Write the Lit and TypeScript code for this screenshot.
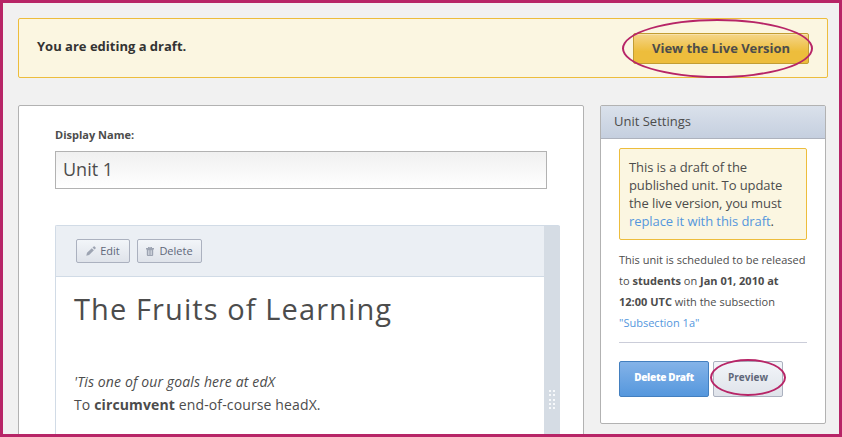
import { LitElement, html, css } from "lit";
import { customElement } from "lit/decorators.js";

@customElement("app-root")
export class AppRoot extends LitElement {
  static styles = css`
    :host {
      display: block;
      font-family: "Open Sans", sans-serif;
      color: #4c4c4c;
    }
    * {
      box-sizing: border-box;
    }
    .frame {
      position: relative;
      width: 842px;
      height: 437px;
      border: 3px solid #b72567;
      background: #f1f1f1;
      padding: 15px 11px 0 15px;
      overflow: hidden;
      white-space: nowrap;
    }
    .alert {
      display: flex;
      align-items: center;
      justify-content: space-between;
      height: 60px;
      border: 1px solid #edbd3c;
      border-radius: 2px;
      background: #fbf6e1;
      padding: 0 18px;
    }
    .alert-text {
      font-size: 13px;
      font-weight: 700;
      color: #333;
      line-height: 18px;
      padding-bottom: 5px;
    }
    button {
      font-family: inherit;
      display: flex;
      align-items: center;
      justify-content: center;
      padding: 0;
      border-radius: 2px;
    }
    .live {
      width: 176px;
      height: 31px;
      border: 1px solid #c29d33;
      background: linear-gradient(#f5d68a, #edbd3c 60%, #edbd3c);
      box-shadow: inset 0 1px 0 rgba(255, 255, 255, 0.3);
      font-size: 13px;
      font-weight: 700;
      letter-spacing: -0.04px;
      color: #4c4c4c;
    }
    .columns {
      display: flex;
      align-items: flex-start;
      justify-content: space-between;
      margin: 27px 2px 0 0;
    }
    .unit {
      width: 566px;
      height: 360px;
      border: 1px solid #b2b2b2;
      border-radius: 2px;
      background: #fff;
      padding: 20px 23px 0 36px;
    }
    .label {
      display: block;
      font-size: 11px;
      font-weight: 700;
      line-height: 18px;
      margin-bottom: 7px;
    }
    .field {
      display: block;
      width: 492px;
      height: 38px;
      border: 1px solid #b2b2b2;
      background: linear-gradient(#f0f0f0, #fff);
      padding: 0 7px 2px;
      font: 400 18px "Open Sans", sans-serif;
      color: #4c4c4c;
      border-radius: 0;
      outline: none;
    }
    .component {
      display: flex;
      width: 505px;
      height: 260px;
      margin-top: 36px;
      border: 1px solid #d1dbe6;
      border-right: 0;
      border-radius: 2px 2px 0 0;
    }
    .component-main {
      flex: 1;
    }
    .handle {
      width: 16px;
      background: #d5dce4;
      display: grid;
      grid-template-columns: 2px 2px;
      grid-auto-rows: 2px;
      gap: 2.25px 2px;
      justify-content: center;
      align-content: start;
      padding-top: 164px;
    }
    .dot {
      background: #f7f9fb;
    }
    .toolbar {
      display: flex;
      gap: 7px;
      height: 51px;
      padding: 13px 20px;
      background: #ebeff4;
      border-bottom: 1px solid #d1dbe6;
    }
    .tool {
      height: 24px;
      gap: 4px;
      border: 1px solid #abb1bf;
      background: linear-gradient(#f2f5f9, #dfe3ea);
      font-size: 11px;
      color: #5f6779;
    }
    .tool span {
      padding-bottom: 1px;
    }
    .edit {
      width: 54px;
    }
    .delete {
      width: 65px;
      gap: 5px;
    }
    .content {
      padding: 12px 18px 0;
      font-size: 14px;
      line-height: 23px;
      letter-spacing: 0.13px;
    }
    h2 {
      margin: 0 0 41px;
      font-size: 29px;
      font-weight: 400;
      line-height: 40px;
      letter-spacing: 1.1px;
    }
    .content p {
      margin: 0;
    }
    .settings {
      width: 226px;
      height: 319px;
      border: 1px solid #b2b2b2;
      border-radius: 2px;
      background: #fff;
    }
    .settings-title {
      height: 33px;
      padding: 0 13px;
      border-bottom: 1px solid #adb2bd;
      background: linear-gradient(#dae1eb, #c5cfdf);
      font-size: 13px;
      font-weight: 400;
      line-height: 30px;
      margin: 0;
    }
    .settings-body {
      padding: 9px 18px 0;
    }
    .notice {
      height: 92px;
      border: 1px solid #edbd3c;
      border-radius: 2px;
      background: #fbf6e1;
      padding: 9px;
      font-size: 13px;
      line-height: 18px;
      letter-spacing: -0.08px;
    }
    a {
      color: #5597dd;
      text-decoration: none;
    }
    .schedule {
      margin: 9px 0 0;
      padding-bottom: 9px;
      border-bottom: 1px solid #cbcdd9;
      font-size: 11px;
      line-height: 21px;
      letter-spacing: 0.01px;
    }
    .actions {
      display: flex;
      gap: 4px;
      margin-top: 18px;
    }
    .primary,
    .secondary {
      height: 36px;
      padding-bottom: 4px;
      font-size: 10px;
      font-weight: 800;
    }
    .primary {
      width: 90px;
      border: 1px solid #437fbf;
      background: linear-gradient(#84b3e8, #5597dd);
      color: #fff;
      letter-spacing: -0.3px;
    }
    .secondary {
      width: 70px;
      border: 1px solid #abb1bf;
      background: linear-gradient(#f2f5f9, #dfe3ea);
      color: #5f6779;
      font-weight: 700;
    }
    .ring {
      position: absolute;
      border: 2px solid #b72567;
      border-radius: 50%;
    }
    .ring-live {
      left: 619px;
      top: 16px;
      width: 191px;
      height: 59px;
    }
    .ring-preview {
      left: 707px;
      top: 356px;
      width: 76px;
      height: 37px;
    }
  `;

  render() {
    return html`
      <div class="frame">
        <div class="alert">
          <span class="alert-text">You are editing a draft.</span>
          <button class="live">View the Live Version</button>
        </div>
        <div class="columns">
          <section class="unit">
            <label class="label" for="name">Display Name:</label>
            <input class="field" id="name" .value=${"Unit 1"} />
            <div class="component">
              <div class="component-main">
                <div class="toolbar">
                  <button class="tool edit">
                    <svg width="10" height="10" viewBox="0 0 10 10" fill="#9da4b2">
                      <path d="M0.3 9.7 1 6.8 5.8 2.2 7.9 4.3 3.1 9 Z M6.5 1.6 7.7 0.4Q8.2 0 8.7 0.5L9.6 1.4Q10 1.9 9.6 2.4L8.5 3.6Z" />
                    </svg>
                    <span>Edit</span>
                  </button>
                  <button class="tool delete">
                    <svg width="8" height="9" viewBox="0 0 8 9" fill="#9da4b2">
                      <path fill-rule="evenodd" d="M0 1H2V0H6V1H8V2.4H0Z M3 .7V1H5V.7Z M.8 2.4H7.2V8Q7.2 9 6.2 9H1.8Q.8 9 .8 8Z M2.3 3.2V8H2.9V3.2Z M3.7 3.2V8H4.3V3.2Z M5.1 3.2V8H5.7V3.2Z" />
                    </svg>
                    <span>Delete</span>
                  </button>
                </div>
                <div class="content">
                  <h2>The Fruits of Learning</h2>
                  <p><em>'Tis one of our goals here at edX</em></p>
                  <p>To <b>circumvent</b> end-of-course headX.</p>
                </div>
              </div>
              <div class="handle">
                ${Array.from({ length: 10 }, () => html`<i class="dot"></i>`)}
              </div>
            </div>
          </section>
          <aside class="settings">
            <h4 class="settings-title">Unit Settings</h4>
            <div class="settings-body">
              <div class="notice">
                This is a draft of the<br />published unit. To update<br />the live version, you must<br /><a>replace it with this draft</a>.
              </div>
              <p class="schedule">
                This unit is scheduled to be released<br />to <b>students</b> on <b>Jan 01, 2010 at</b><br /><b>12:00 UTC</b> with the subsection<br /><a>"Subsection 1a"</a>
              </p>
              <div class="actions">
                <button class="primary">Delete Draft</button>
                <button class="secondary">Preview</button>
              </div>
            </div>
          </aside>
        </div>
        <div class="ring ring-live"></div>
        <div class="ring ring-preview"></div>
      </div>
    `;
  }
}
